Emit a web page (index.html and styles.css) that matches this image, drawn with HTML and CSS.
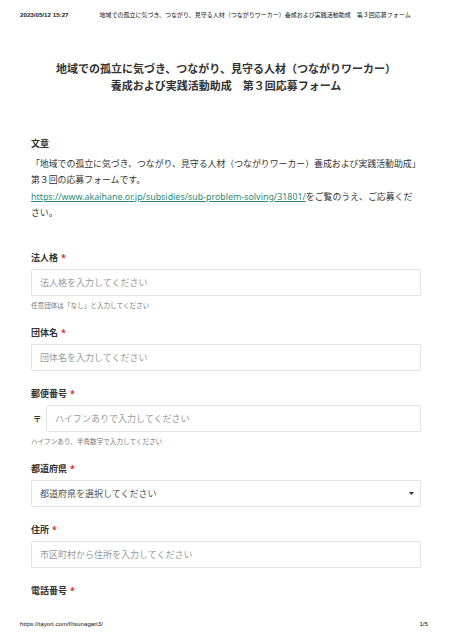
FILE: index.html
```html
<!DOCTYPE html>
<html lang="ja">
<head>
<meta charset="utf-8">
<title>地域での孤立に気づき、つながり、見守る人材（つながりワーカー）養成および実践活動助成　第３回応募フォーム</title>
<link rel="stylesheet" href="styles.css">
</head>
<body>
<div class="page">
  <header class="print-head">
    <span class="print-date">2023/05/12 15:27</span>
    <span class="print-title">地域での孤立に気づき、つながり、見守る人材（つながりワーカー）養成および実践活動助成　第３回応募フォーム</span>
  </header>

  <main class="content">
    <h1 class="form-title">地域での孤立に気づき、つながり、見守る人材（つながりワーカー）<br>養成および実践活動助成　第３回応募フォーム</h1>

    <section class="intro">
      <h2 class="intro-label">文章</h2>
      <p class="intro-text">「地域での孤立に気づき、つながり、見守る人材（つながりワーカー）養成および実践活動助成」<br>第３回の応募フォームです。<br><a class="intro-link" href="#">https://www.akaihane.or.jp/subsidies/sub-problem-solving/31801/</a>をご覧のうえ、ご応募ください。</p>
    </section>

    <form class="form">
      <div class="field">
        <label class="field-label">法人格<span class="req">*</span></label>
        <input class="field-input" type="text" placeholder="法人格を入力してください">
        <p class="field-help">任意団体は「なし」と入力してください</p>
      </div>

      <div class="field">
        <label class="field-label">団体名<span class="req">*</span></label>
        <input class="field-input" type="text" placeholder="団体名を入力してください">
      </div>

      <div class="field">
        <label class="field-label">郵便番号<span class="req">*</span></label>
        <div class="postal-row">
          <span class="postal-mark">〒</span>
          <input class="field-input" type="text" placeholder="ハイフンありで入力してください">
        </div>
        <p class="field-help">ハイフンあり、半角数字で入力してください</p>
      </div>

      <div class="field">
        <label class="field-label">都道府県<span class="req">*</span></label>
        <div class="field-select">
          <span class="select-text">都道府県を選択してください</span>
          <svg class="select-arrow" width="5" height="3" viewBox="0 0 5 3"><path d="M0 0H5L2.5 3Z" fill="#333"/></svg>
        </div>
      </div>

      <div class="field">
        <label class="field-label">住所<span class="req">*</span></label>
        <input class="field-input" type="text" placeholder="市区町村から住所を入力してください">
      </div>

      <div class="field">
        <label class="field-label">電話番号<span class="req">*</span></label>
        <input class="field-input" type="text" placeholder="電話番号を入力してください">
      </div>
    </form>
  </main>

  <footer class="print-foot">
    <span class="print-url">https://tayori.com/f/tsunagari3/</span>
    <span class="print-page">1/5</span>
  </footer>
</div>
</body>
</html>
```

FILE: styles.css
```css
* { box-sizing: border-box; }

html, body {
  margin: 0;
  padding: 0;
  background: #fff;
}

.page {
  width: 452px;
  height: 640px;
  display: flex;
  flex-direction: column;
  overflow: hidden;
  font-family: "Noto Sans", "Noto Sans CJK JP", sans-serif;
  color: #333;
}

/* print header / footer */
.print-head {
  display: flex;
  gap: 31px;
  padding: 11px 20px 0;
  font-family: "Liberation Sans", "Noto Sans CJK JP", sans-serif;
  font-size: 6.2px;
  line-height: 8px;
  color: #111;
  white-space: nowrap;
}
.print-date {
  font-weight: 700;
  color: #222;
}
.print-title {
  font-size: 6px;
}

.print-foot {
  height: 38px;
  flex: none;
  display: flex;
  align-items: flex-end;
  justify-content: space-between;
  padding: 0 24px 12px 20px;
  font-family: "Liberation Sans", sans-serif;
  font-size: 6.2px;
  line-height: 8px;
  color: #111;
}

/* content */
.content {
  flex: 1;
  overflow: hidden;
  padding: 0 31px;
}

.form-title {
  margin: 42px 0 0;
  text-align: center;
  font-size: 11px;
  line-height: 16.5px;
  font-weight: 700;
  color: #333;
}

.intro {
  margin-top: 44px;
}
.intro-label {
  margin: 0;
  font-size: 9px;
  line-height: 12px;
  font-weight: 700;
}
.intro-text {
  margin: 6px 0 0;
  font-size: 8.9px;
  line-height: 16.4px;
}
.intro-link {
  color: #2a8b7b;
  text-decoration: underline;
  line-height: 1;
}

.form {
  margin-top: 30px;
  display: flex;
  flex-direction: column;
  gap: 17px;
}

.field {
  display: flex;
  flex-direction: column;
}

.field-label {
  font-size: 9px;
  line-height: 12px;
  font-weight: 700;
  margin-bottom: 5px;
}
.req {
  color: #e02b2b;
  margin-left: 3px;
}

.field-input,
.field-select {
  width: 100%;
  height: 27px;
  border: 1px solid #e3e3e3;
  border-radius: 2px;
  background: #fff;
  padding: 0 8px;
  font-family: "Noto Sans", "Noto Sans CJK JP", sans-serif;
  font-size: 9px;
  color: #333;
  outline: none;
}
.field-input::placeholder {
  color: #9a9a9a;
}

.field-help {
  margin: 6px 0 0;
  font-size: 6.6px;
  line-height: 8px;
  color: #777;
}

.postal-row {
  display: flex;
  align-items: center;
  gap: 5px;
}
.postal-mark {
  flex: none;
  width: 8px;
  margin-left: 2px;
  font-family: "Noto Sans CJK JP", sans-serif;
  font-size: 8.5px;
  line-height: 12px;
  font-weight: 700;
  color: #333;
}

.field-select {
  display: flex;
  align-items: center;
  justify-content: space-between;
  padding-right: 6px;
}
.select-text {
  color: #555;
}
.select-arrow {
  display: block;
}
```
